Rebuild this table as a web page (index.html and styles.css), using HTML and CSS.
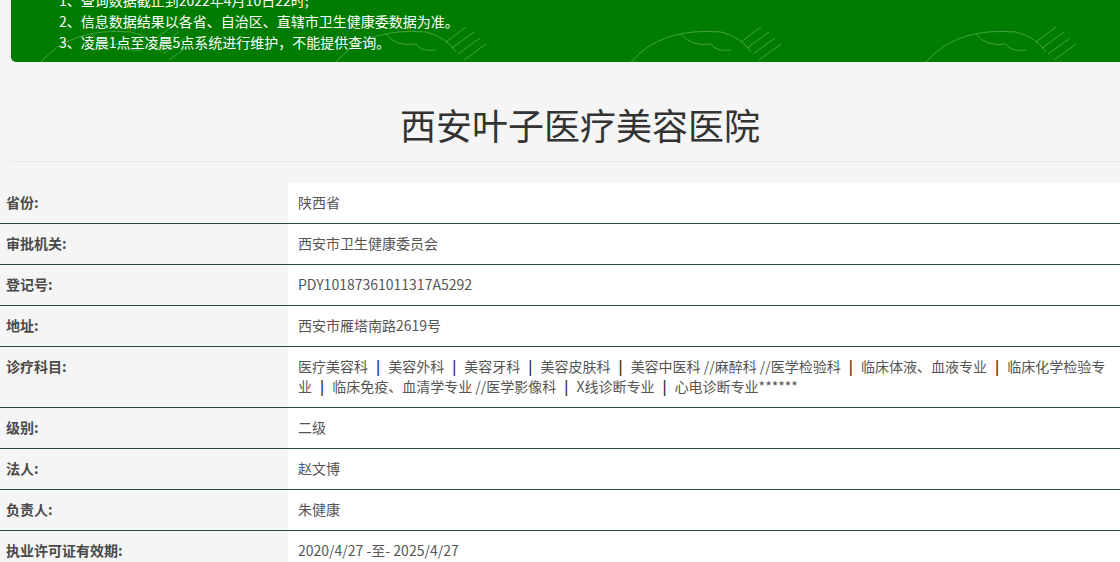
FILE: index.html
```html
<!DOCTYPE html>
<html lang="zh-CN">
<head>
<meta charset="utf-8">
<title>西安叶子医疗美容医院</title>
<link rel="stylesheet" href="styles.css">
</head>
<body>
<div class="notice">
  <p>1、查询数据截止到2022年4月10日22时;</p>
  <p>2、信息数据结果以各省、自治区、直辖市卫生健康委数据为准。</p>
  <p>3、凌晨1点至凌晨5点系统进行维护，不能提供查询。</p>
  <svg class="wm" width="1109" height="40" viewBox="0 0 1109 40" aria-hidden="true">
    <g fill="none" stroke="rgba(190,235,190,0.35)" stroke-width="1">
      <g transform="translate(20,0)">
        <path d="M10 40 Q40 5 100 10 Q120 15 130 30"/>
        <path d="M60 12 Q70 25 90 22 Q95 30 110 28"/>
        <path d="M120 20 l20 -15 M126 26 l22 -16 M132 32 l22 -16 M138 38 l22 -16"/>
      </g>
      <g transform="translate(315,0)">
        <path d="M10 40 Q40 5 100 10 Q120 15 130 30"/>
        <path d="M60 12 Q70 25 90 22 Q95 30 110 28"/>
        <path d="M120 20 l20 -15 M126 26 l22 -16 M132 32 l22 -16 M138 38 l22 -16"/>
      </g>
      <g transform="translate(610,0)">
        <path d="M10 40 Q40 5 100 10 Q120 15 130 30"/>
        <path d="M60 12 Q70 25 90 22 Q95 30 110 28"/>
        <path d="M120 20 l20 -15 M126 26 l22 -16 M132 32 l22 -16 M138 38 l22 -16"/>
      </g>
      <g transform="translate(905,0)">
        <path d="M10 40 Q40 5 100 10 Q120 15 130 30"/>
        <path d="M60 12 Q70 25 90 22 Q95 30 110 28"/>
        <path d="M120 20 l20 -15 M126 26 l22 -16 M132 32 l22 -16 M138 38 l22 -16"/>
      </g>
    </g>
  </svg>
</div>

<div class="head">
  <h1 class="title">西安叶子医疗美容医院</h1>
</div>

<div class="info">
  <div class="row"><div class="label">省份:</div><div class="value">陕西省</div></div>
  <div class="row"><div class="label">审批机关:</div><div class="value">西安市卫生健康委员会</div></div>
  <div class="row"><div class="label">登记号:</div><div class="value">PDY10187361011317A5292</div></div>
  <div class="row"><div class="label">地址:</div><div class="value">西安市雁塔南路2619号</div></div>
  <div class="row"><div class="label">诊疗科目:</div><div class="value">医疗美容科<span class="sep">|</span>美容外科<span class="sep">|</span>美容牙科<span class="sep">|</span>美容皮肤科<span class="sep">|</span>美容中医科 //麻醉科 //医学检验科<span class="sep">|</span>临床体液、血液专业<span class="sep">|</span>临床化学检验专业<span class="sep">|</span>临床免疫、血清学专业 //医学影像科<span class="sep">|</span>X线诊断专业<span class="sep">|</span>心电诊断专业******</div></div>
  <div class="row"><div class="label">级别:</div><div class="value">二级</div></div>
  <div class="row"><div class="label">法人:</div><div class="value">赵文博</div></div>
  <div class="row"><div class="label">负责人:</div><div class="value">朱健康</div></div>
  <div class="row"><div class="label">执业许可证有效期:</div><div class="value">2020/4/27 -至- 2025/4/27</div></div>
</div>
</body>
</html>
```

FILE: styles.css
```css
html, body {
  margin: 0;
  padding: 0;
}
body {
  background: #f5f5f5;
  font-family: "Noto Sans CJK SC", "Noto Sans", sans-serif;
  overflow: hidden;
  width: 1120px;
}
.notice {
  position: relative;
  margin: -18px 0 0 11px;
  padding: 8px 0 9px 48px;
  background: #007c00;
  color: #fff;
  font-size: 14px;
  line-height: 21px;
  border-radius: 0 0 0 5px;
  overflow: hidden;
}
.notice p {
  margin: 0;
  position: relative;
  z-index: 1;
}
.wm {
  position: absolute;
  left: 0;
  bottom: 0;
}
.head {
  margin: 41px 0 0 10px;
  width: 1140px;
  border-bottom: 1px solid #e9e9e9;
  padding-bottom: 15px;
}
.title {
  margin: 0;
  font-size: 36px;
  font-weight: normal;
  line-height: 43px;
  color: #333;
  text-align: center;
}
.info {
  margin-top: 21px;
  font-size: 14px;
  line-height: 20px;
}
.row {
  display: flex;
  border-bottom: 1px solid #2c4a3e;
}
.label {
  width: 276px;
  flex: none;
  padding: 9px 6px 11px;
  font-weight: bold;
  color: #4a4a4a;
}
.value {
  flex: 1;
  background: #fff;
  padding: 9px 2px 11px 10px;
  color: #555;
}
.sep {
  display: inline-block;
  margin: 0 8px;
  color: #333;
  font-weight: bold;
}
```
